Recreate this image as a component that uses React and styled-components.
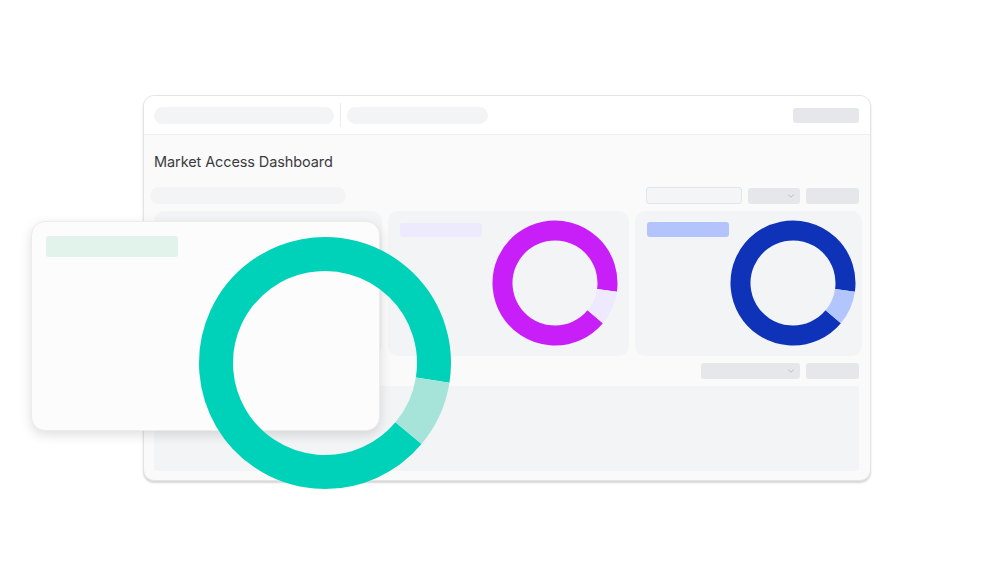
import React from "react";
import styled, { createGlobalStyle } from "styled-components";
import { ChevronDown } from "lucide-react";

const Global = createGlobalStyle`
  html, body { margin: 0; padding: 0; background: #ffffff; }
  body { font-family: Inter, "Noto Sans", sans-serif; }
`;

const Stage = styled.div`
  position: relative;
  width: 1000px;
  height: 562px;
  overflow: hidden;
  background: #ffffff;
  padding: 95px 0 0 143px;
  box-sizing: border-box;
`;

const Window = styled.div`
  width: 728px;
  height: 386px;
  box-sizing: border-box;
  border: 1px solid #e3e4e7;
  border-radius: 11px;
  background: #fafafa;
  box-shadow: 0 2px 2px rgba(0, 0, 0, 0.16);
  display: flex;
  flex-direction: column;
  overflow: hidden;
`;

const Header = styled.div`
  height: 39px;
  flex: none;
  box-sizing: border-box;
  background: #ffffff;
  border-bottom: 1px solid #efeff1;
  display: flex;
  align-items: center;
  padding: 0 11px 0 10px;
  gap: 6px;
`;

const Pill = styled.div`
  width: ${(p) => p.$w}px;
  height: ${(p) => p.$h || 17}px;
  border-radius: 9px;
  background: #f3f4f6;
  margin-left: ${(p) => p.$ml || 0}px;
`;

const Divider = styled.div`
  width: 1px;
  height: 24px;
  background: #ececef;
`;

const Spacer = styled.div`
  flex: 1;
`;

const Block = styled.div`
  width: ${(p) => p.$w}px;
  height: ${(p) => p.$h || 16}px;
  border-radius: 3px;
  background: #e6e7eb;
`;

const Body = styled.div`
  flex: 1;
  display: flex;
  flex-direction: column;
  padding: 17px 11px 9px 10px;
`;

const Title = styled.h1`
  margin: 0;
  font-family: Inter, "Noto Sans", sans-serif;
  font-weight: 400;
  font-size: 14.5px;
  line-height: 20px;
  color: #3a3a40;
  letter-spacing: -0.1px;
`;

const ToolRow = styled.div`
  display: flex;
  align-items: center;
  gap: 6px;
  margin-top: ${(p) => p.$mt}px;
  height: ${(p) => p.$h}px;
  flex: none;
`;

const Input = styled.div`
  width: 96px;
  height: 17px;
  box-sizing: border-box;
  border: 1px solid #e4e5e9;
  border-radius: 3px;
  background: #f4f5f7;
`;

const Select = styled.div`
  width: ${(p) => p.$w}px;
  height: 16px;
  border-radius: 3px;
  background: #e6e7eb;
  display: flex;
  align-items: center;
  justify-content: flex-end;
  padding-right: 4px;
  box-sizing: border-box;
  color: #a3a6b1;
`;

const Cards = styled.div`
  display: grid;
  grid-template-columns: 228px 241px 227px;
  gap: 6px;
  margin-top: 7px;
  height: 145px;
  flex: none;
  margin-right: -3px;
`;

const Card = styled.div`
  position: relative;
  background: #f3f4f6;
  border-radius: 10px;
  padding: ${(p) => p.$pt || 12}px 12px;
`;

const Label = styled.div`
  width: ${(p) => p.$w}px;
  height: ${(p) => p.$h}px;
  border-radius: 3px;
  background: ${(p) => p.$c};
`;

const DonutHolder = styled.div`
  position: absolute;
  left: ${(p) => p.$cx - p.$size / 2}px;
  top: ${(p) => p.$cy - p.$size / 2}px;
  width: ${(p) => p.$size}px;
  height: ${(p) => p.$size}px;
`;

const Panel = styled.div`
  margin-top: 7px;
  flex: 1;
  background: #f3f4f6;
  border-radius: 3px;
`;

const FloatCard = styled.div`
  position: absolute;
  left: 31px;
  top: 221px;
  width: 349px;
  height: 210px;
  box-sizing: border-box;
  border-radius: 14px;
  background: #fcfcfc;
  border: 1px solid #ececec;
  box-shadow: 0 4px 12px rgba(0, 0, 0, 0.13);
  padding: 14px 14px;
`;

const BigDonut = styled.div`
  position: absolute;
  left: ${325 - 128}px;
  top: ${363 - 128}px;
  width: 256px;
  height: 256px;
`;

function arc(cx, cy, r, a0, a1) {
  const rad = (a) => (a * Math.PI) / 180;
  const x0 = cx + r * Math.cos(rad(a0));
  const y0 = cy + r * Math.sin(rad(a0));
  const x1 = cx + r * Math.cos(rad(a1));
  const y1 = cy + r * Math.sin(rad(a1));
  const large = a1 - a0 > 180 ? 1 : 0;
  return `M ${x0} ${y0} A ${r} ${r} 0 ${large} 1 ${x1} ${y1}`;
}

function Donut({ size, r, width, main, light, start = 8, end = 40 }) {
  const c = size / 2;
  return (
    <svg width={size} height={size} viewBox={`0 0 ${size} ${size}`}>
      <path d={arc(c, c, r, end, start + 360)} fill="none" stroke={main} strokeWidth={width} />
      <path d={arc(c, c, r, start, end)} fill="none" stroke={light} strokeWidth={width} />
    </svg>
  );
}

export default function App() {
  return (
    <>
      <Global />
      <Stage>
        <Window>
          <Header>
            <Pill $w={180} />
            <Divider />
            <Pill $w={141} />
            <Spacer />
            <Block $w={66} $h={15} />
          </Header>
          <Body>
            <Title>Market Access Dashboard</Title>
            <ToolRow $mt={15} $h={17}>
              <Pill $w={196} $ml={-4} />
              <Spacer />
              <Input />
              <Select $w={52}>
                <ChevronDown size={10} strokeWidth={1.6} />
              </Select>
              <Block $w={53} />
            </ToolRow>
            <Cards>
              <Card />
              <Card>
                <Label $w={82} $h={14} $c="#eeeafe" />
                <DonutHolder $cx={167} $cy={72} $size={128}>
                  <Donut size={128} r={52.5} width={20} main="#c81ff8" light="#eee9fe" />
                </DonutHolder>
              </Card>
              <Card $pt={11}>
                <Label $w={82} $h={15} $c="#b3c4fd" />
                <DonutHolder $cx={158} $cy={72} $size={128}>
                  <Donut size={128} r={52.5} width={20} main="#0e33b9" light="#b3c5fd" />
                </DonutHolder>
              </Card>
            </Cards>
            <ToolRow $mt={7} $h={16}>
              <Spacer />
              <Select $w={99}>
                <ChevronDown size={10} strokeWidth={1.6} />
              </Select>
              <Block $w={53} />
            </ToolRow>
            <Panel />
          </Body>
        </Window>
        <FloatCard>
          <Label $w={132} $h={21} $c="#e1f3ea" />
        </FloatCard>
        <BigDonut>
          <Donut size={256} r={109} width={34} main="#00d2b9" light="#a6e4da" start={9} end={40} />
        </BigDonut>
      </Stage>
    </>
  );
}
